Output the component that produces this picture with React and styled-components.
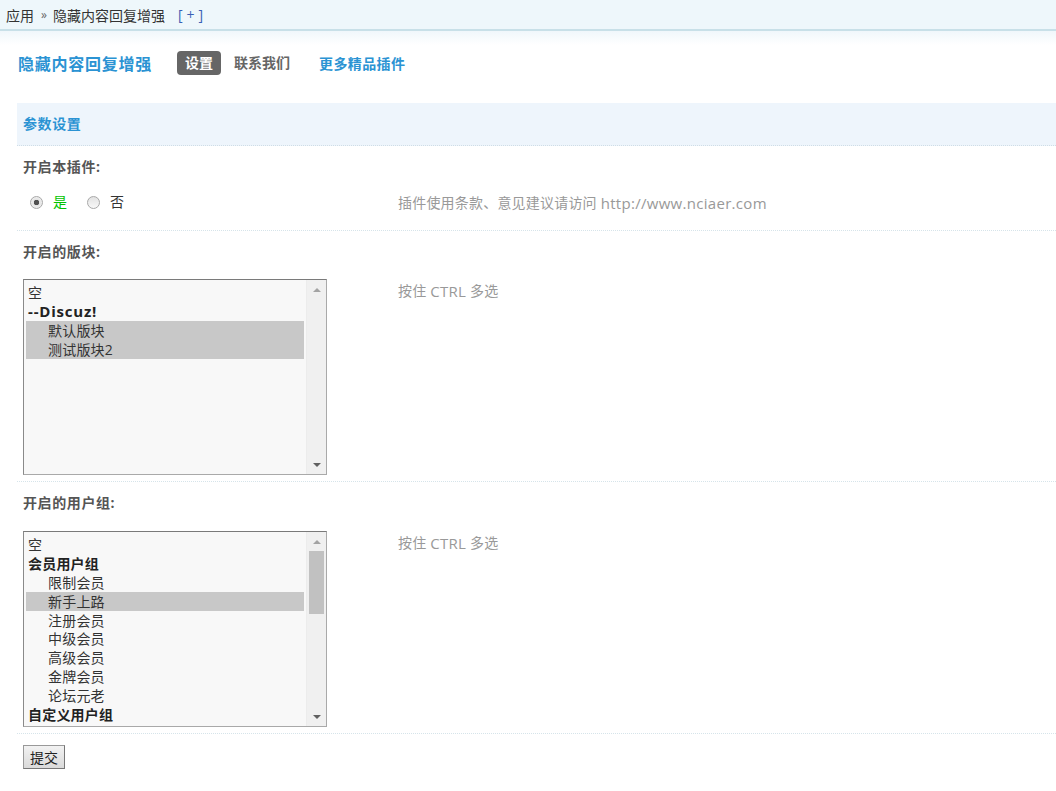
import React from 'react'
import styled, { createGlobalStyle } from 'styled-components';

const GlobalStyle = createGlobalStyle`
  body {
    margin: 0;
    background: #fff;
    font-family: "Open Sans", "Noto Sans CJK SC", sans-serif;
    font-size: 14px;
    color: #333;
  }
`;

const forums = [
  { label: '空' },
  { label: '--Discuz!', group: true, latin: true },
  { label: '默认版块', indent: true, selected: true },
  { label: '测试版块2', indent: true, selected: true },
];

const groups = [
  { label: '空' },
  { label: '会员用户组', group: true },
  { label: '限制会员', indent: true },
  { label: '新手上路', indent: true, selected: true },
  { label: '注册会员', indent: true },
  { label: '中级会员', indent: true },
  { label: '高级会员', indent: true },
  { label: '金牌会员', indent: true },
  { label: '论坛元老', indent: true },
  { label: '自定义用户组', group: true },
];

function ListBox({ items, thumb }) {
  return (
    <Box>
      <Options>
        {items.map((it, i) => (
          <Option
            key={i}
            $group={it.group}
            $indent={it.indent}
            $selected={it.selected}
            $latin={it.latin}
          >
            {it.label}
          </Option>
        ))}
      </Options>
      <Scrollbar>
        <Arrow $up />
        <Track>{thumb && <Thumb />}</Track>
        <Arrow />
      </Scrollbar>
    </Box>
  );
}

function App() {
  return (
    <>
      <GlobalStyle />
      <Crumbs>
        <span>应用</span>
        <Sep>»</Sep>
        <span>隐藏内容回复增强</span>
        <AddLink>[+]</AddLink>
      </Crumbs>
      <Page>
        <Nav>
          <Title>隐藏内容回复增强</Title>
          <Tab $active>设置</Tab>
          <Tab>联系我们</Tab>
          <MoreLink>更多精品插件</MoreLink>
        </Nav>
        <Form>
          <Header>参数设置</Header>

          <Label>开启本插件:</Label>
          <Row $pad="16px 0 17px">
            <Field>
              <Radio $checked />
              <RadioText $yes>是</RadioText>
              <Radio />
              <RadioText>否</RadioText>
            </Field>
            <Tip $top="1px">
              插件使用条款、意见建议请访问 <Latin>http://www.nciaer.com</Latin>
            </Tip>
          </Row>

          <Label>开启的版块:</Label>
          <Row $pad="18px 0 6px">
            <Field>
              <ListBox items={forums} />
            </Field>
            <Tip $top="2px">
              按住 <Latin>CTRL</Latin> 多选
            </Tip>
          </Row>

          <Label>开启的用户组:</Label>
          <Row $pad="19px 0 6px">
            <Field>
              <ListBox items={groups} thumb />
            </Field>
            <Tip $top="2px">
              按住 <Latin>CTRL</Latin> 多选
            </Tip>
          </Row>

          <Submit>提交</Submit>
        </Form>
      </Page>
    </>
  )
}

const Crumbs = styled.div`
  display: flex;
  align-items: center;
  height: 29px;
  padding-left: 6px;
  background: #eef7fb;
  border-bottom: 2px solid #c8e0e8;
  font-size: 14px;
  color: #333;
`;

const Sep = styled.span`
  margin: 0 6px 0 7px;
  color: #666;
  font-size: 12px;
`;

const AddLink = styled.span`
  margin-left: 13px;
  color: #3a5fb5;
  letter-spacing: 4px;
`;

const Page = styled.div`
  padding-left: 17px;
  background: linear-gradient(#f0f7fb, #fff 14px);
`;

const Nav = styled.div`
  display: flex;
  align-items: center;
  height: 24px;
  padding-top: 20px;
`;

const Title = styled.div`
  margin-left: 1px;
  margin-right: 25px;
  font-size: 16px;
  font-weight: bold;
  letter-spacing: 0.75px;
  color: #2b93d3;
`;

const Tab = styled.div`
  height: 24px;
  line-height: 24px;
  padding: 0 8px;
  margin-right: 5px;
  border-radius: 4px;
  font-size: 14px;
  font-weight: bold;
  color: ${p => (p.$active ? '#fff' : '#666')};
  background: ${p => (p.$active ? '#666' : 'transparent')};
`;

const MoreLink = styled.div`
  margin-left: 16px;
  font-size: 14px;
  font-weight: bold;
  letter-spacing: 0.4px;
  color: #2b93d3;
`;

const Form = styled.div`
  margin-top: 28px;
`;

const Header = styled.div`
  height: 42px;
  line-height: 42px;
  padding-left: 6px;
  background: #eef5fc;
  border-bottom: 1px dotted #cfdde6;
  font-size: 14px;
  font-weight: bold;
  letter-spacing: 0.6px;
  color: #2b93d3;
`;

const Label = styled.div`
  padding: 12px 0 0 6px;
  height: 18px;
  line-height: 18px;
  font-size: 14px;
  font-weight: bold;
  letter-spacing: 0.6px;
  color: #555;
`;

const Row = styled.div`
  display: flex;
  align-items: flex-start;
  padding: ${p => p.$pad};
  border-bottom: 1px dotted #d6e4ea;
`;

const Field = styled.div`
  display: flex;
  align-items: center;
  width: 375px;
  height: fit-content;
  padding-left: 6px;
`;

const Tip = styled.div`
  height: 20px;
  padding-top: ${p => p.$top};
  line-height: 20px;
  font-size: 14px;
  letter-spacing: 0.2px;
  color: #999;
`;

const Latin = styled.span`
  font-size: 15px;
  line-height: 20px;
  letter-spacing: 0.3px;
  vertical-align: top;
`;

const Radio = styled.span`
  box-sizing: border-box;
  width: 13px;
  height: 13px;
  margin-left: 7px;
  border-radius: 50%;
  border: 1px solid #a8a8a8;
  background: ${p =>
    p.$checked
      ? 'radial-gradient(circle, #505050 0 2.5px, #e4e4e4 3px, #f6f6f6)'
      : 'linear-gradient(#e2e2e2, #f8f8f8)'};
`;

const RadioText = styled.span`
  height: 20px;
  line-height: 20px;
  margin-left: 10px;
  margin-right: 13px;
  color: ${p => (p.$yes ? '#00c400' : '#333')};
`;

const Box = styled.div`
  display: flex;
  box-sizing: border-box;
  width: 304px;
  height: 196px;
  border: 1px solid #a9a9a9;
  border-top-color: #7a7a7a;
  border-left-color: #8a8a8a;
  background: #f8f8f8;
  overflow: hidden;
`;

const Options = styled.div`
  flex: 1;
  padding: 3px 2px 0 2px;
`;

const Option = styled.div`
  height: 18.9px;
  line-height: 19px;
  padding-left: ${p => (p.$indent ? '22px' : '2px')};
  font-size: ${p => (p.$latin ? '15px' : '14px')};
  letter-spacing: ${p => (p.$latin ? '0.8px' : '0.2px')};
  font-weight: ${p => (p.$group ? 'bold' : 'normal')};
  color: ${p => (p.$group ? '#222' : '#333')};
  background: ${p => (p.$selected ? '#c8c8c8' : 'transparent')};
  white-space: nowrap;
`;

const Scrollbar = styled.div`
  display: flex;
  flex-direction: column;
  width: 19px;
  background: #f0f0f0;
  border-left: 1px solid #ececec;
`;

const Arrow = styled.div`
  height: 19px;
  display: flex;
  align-items: center;
  justify-content: center;
  &::before {
    content: '';
    border-left: 4px solid transparent;
    border-right: 4px solid transparent;
    ${p =>
      p.$up
        ? 'border-bottom: 4px solid #a3a3a3;'
        : 'border-top: 4px solid #606060;'}
  }
`;

const Track = styled.div`
  flex: 1;
  padding: 0 2px;
`;

const Thumb = styled.div`
  height: 63px;
  background: #c1c1c1;
`;

const Submit = styled.button`
  margin: 11px 0 0 6px;
  width: 42px;
  height: 24px;
  padding: 0;
  font-family: "Open Sans", "Noto Sans CJK SC", sans-serif;
  font-size: 14px;
  color: #222;
  background: linear-gradient(#f2f2f2, #dadada);
  border: 1px solid #999;
  border-right-color: #777;
  border-bottom-color: #777;
  border-radius: 0;
`;

export default App
